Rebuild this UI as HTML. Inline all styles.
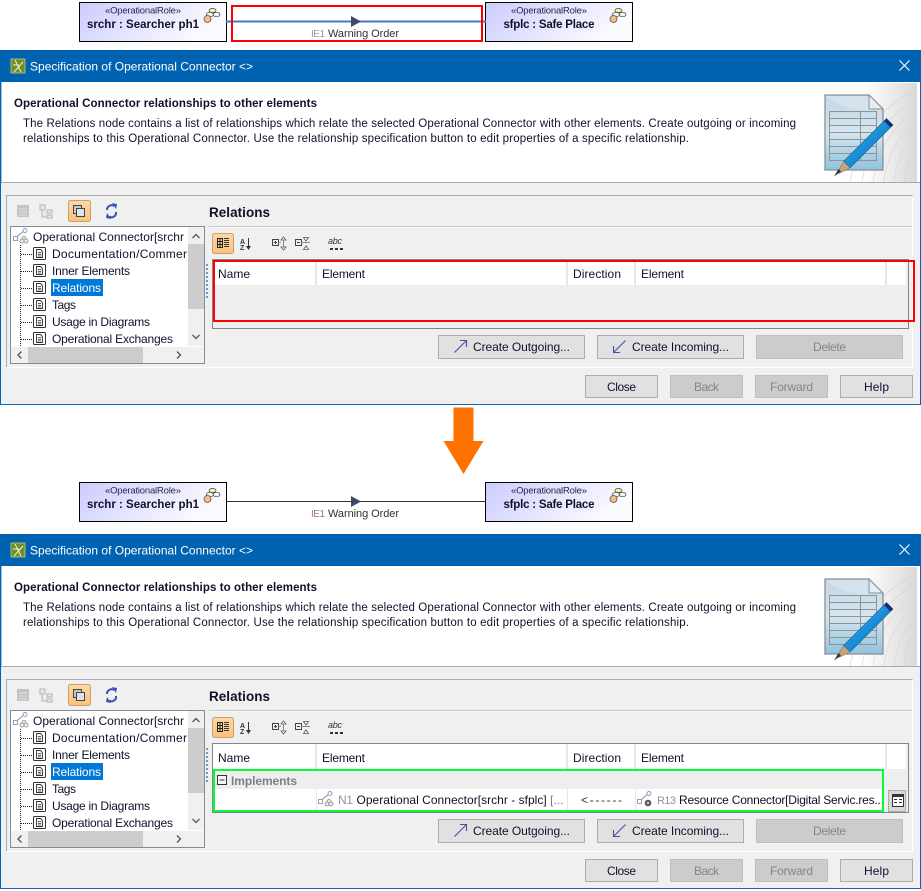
<!DOCTYPE html>
<html><head><meta charset="utf-8"><title>Specification of Operational Connector</title>
<style>
html,body{margin:0;padding:0;background:#fff}
svg{display:block}
text{font-family:"Liberation Sans",sans-serif;font-size:12px;fill:#10102a;white-space:pre}
.b{font-weight:bold}
.w{fill:#fff}
.dis{fill:#858585}
.s{font-size:9.5px;fill:#26264a}
.az{font-size:7px;font-weight:bold;fill:#333}
.abc{font-size:9px;font-style:italic;fill:#333}
</style></head><body>
<svg xmlns="http://www.w3.org/2000/svg" width="921" height="891" viewBox="0 0 921 891">
<defs>
<linearGradient id="role" x1="0" y1="0" x2="1" y2="0.3"><stop offset="0" stop-color="#ccccff"/><stop offset="1" stop-color="#fbfbff"/></linearGradient>
<linearGradient id="wm" x1="0" y1="0" x2="1" y2="0"><stop offset="0" stop-color="#ffffff"/><stop offset=".45" stop-color="#ffffff"/><stop offset="1" stop-color="#d9d9d9"/></linearGradient>
<linearGradient id="doc" x1="0" y1="0" x2="0" y2="1"><stop offset="0" stop-color="#c3d6e6"/><stop offset=".5" stop-color="#d6e5ef"/><stop offset="1" stop-color="#8fc3de"/></linearGradient>
<linearGradient id="pen" x1="0" y1="0" x2="1" y2="1"><stop offset="0" stop-color="#3db6f0"/><stop offset=".5" stop-color="#1a8fd8"/><stop offset="1" stop-color="#0b5a9c"/></linearGradient>
<linearGradient id="sel" x1="0" y1="0" x2="0" y2="1"><stop offset="0" stop-color="#fcd9a6"/><stop offset="1" stop-color="#fbc27c"/></linearGradient>
<g id="roleIcon">
<ellipse cx="6.5" cy="1.5" rx="3.5" ry="2" fill="#f7f2a8" stroke="#444" stroke-width=".7"/>
<ellipse cx="10.5" cy="5.5" rx="3.5" ry="2.2" fill="#f4f4ee" stroke="#444" stroke-width=".7"/>
<ellipse cx="4" cy="5.5" rx="3.5" ry="2.2" fill="#f4f4ee" stroke="#444" stroke-width=".7"/>
<circle cx="1.5" cy="10" r="3.5" fill="#f0bd94" stroke="#555" stroke-width=".8"/>
</g>
<g id="docIcon">
<rect x=".5" y=".5" width="12" height="12" rx="1" fill="#fff" stroke="#333"/>
<path d="M3.500 2.500h4l2 2v6h-6z" fill="#fff" stroke="#333" stroke-width=".9"/>
<path d="M4.800 5.500h3.400M4.800 7.300h3.400M4.800 9h3.400" stroke="#333" stroke-width=".8"/>
</g>
<g id="connIcon" fill="none">
<path d="M3 9.500L11.500 2.500" stroke="#8a8f98" stroke-width="1"/>
<rect x="0.500" y="8.500" width="4" height="4" fill="#fff" stroke="#7f9bc8" stroke-width=".9"/>
<circle cx="12" cy="2.500" r="2" fill="#fff" stroke="#7f9bc8" stroke-width=".9"/>
<circle cx="11" cy="10.500" r="2" fill="#f2eecb" stroke="#8a8a8a" stroke-width=".8"/>
<circle cx="9" cy="13" r="2" fill="#eee" stroke="#8a8a8a" stroke-width=".8"/>
<circle cx="13" cy="13" r="2" fill="#eee" stroke="#8a8a8a" stroke-width=".8"/>
</g>
<g id="connIcon2" fill="none">
<path d="M3 9.500L11.500 2.500" stroke="#8a8f98" stroke-width="1"/>
<rect x="0.500" y="8.500" width="4" height="4" fill="#fff" stroke="#7f9bc8" stroke-width=".9"/>
<circle cx="12" cy="2.500" r="2" fill="#fff" stroke="#7f9bc8" stroke-width=".9"/>
<circle cx="11" cy="12" r="3" fill="#666" stroke="#444" stroke-width=".6"/>
<circle cx="11" cy="12" r="1" fill="#ddd"/>
</g>
<g id="btnOut"><path d="M0.500 13.500L12.500 1.500M6 1.500h6.500v6.500" fill="none" stroke="#4350a8" stroke-width="1.100"/></g>
<g id="btnIn"><path d="M12.500 1.500L0.500 13.500M7 13.500H0.500V7" fill="none" stroke="#4350a8" stroke-width="1.100"/></g>

<g id="chrome">
<rect x="0" y="50" width="921" height="355" fill="#f0f0f0"/>
<rect x="0" y="50" width="921" height="32" fill="#0063b1"/>
<rect x="0" y="50" width="1" height="355" fill="#0063b1"/>
<rect x="920" y="50" width="1" height="355" fill="#0063b1"/>
<rect x="0" y="404" width="921" height="1" fill="#0f6cb8"/>
<rect x="1" y="82" width="919" height="100" fill="#fff"/>
<rect x="1" y="82" width="1" height="100" fill="#9fc4e3"/>
<rect x="820" y="83" width="97" height="99" fill="url(#wm)"/>
<g fill="none" stroke="#d6d6d6" stroke-width=".7">
<path d="M917 100C885 115 868 145 862 182M917 112C892 125 878 150 873 182M917 124C898 134 887 156 884 182M917 136C904 144 896 162 894 182M917 148C909 154 905 168 904 182M917 90C880 105 858 140 850 182"/>
</g>
<path d="M825 95H869L883 109V170H825Z" fill="url(#doc)" stroke="#8a9096" stroke-width="1.300"/>
<path d="M826 96H868C872 102 878 108 882 110C860 112 838 108 826 96Z" fill="#dbe7f1" opacity=".7"/>
<path d="M869 95V109H883Z" fill="#e4eef7" stroke="#8a9096" stroke-width="1"/>
<g stroke="#8e9396" stroke-width="1" fill="none"><rect x="829.500" y="111.500" width="47" height="49"/><path d="M829 118.500h47M829 125.500h47M829 132.500h47M829 139.500h47M829 146.500h47M829 153.500h47M860.500 111v49"/></g>
<path d="M843.500 161.500L886.500 118.500L893 125L850 168Z" fill="url(#pen)" stroke="#1a5f90" stroke-width=".6"/>
<path d="M884 121L886.500 118.500L893 125L890.500 127.500Z" fill="#1d2a78"/>
<path d="M843.500 161.500L850 168L839 173.500L837.500 172Z" fill="#c6a57e" stroke="#7a6248" stroke-width=".5"/>
<path d="M838.500 169L841 171.500L834 176.500Z" fill="#333"/>
<rect x="1" y="182" width="919" height="1" fill="#ababab"/>
<path d="M6.500 367V195.500H912.500" fill="none" stroke="#ababab"/>
<path d="M7 367.500H913M912.500 197V367" fill="none" stroke="#fff"/>
<!-- tree toolbar -->
<rect x="17" y="205" width="12" height="12" fill="#c4c4c4"/>
<path d="M19 209h8M19 212h8M19 215h8" stroke="#e0e0e0"/>
<path d="M40 205h5v5h-5zM47 210h5v3h-5zM47 215h5v3h-5zM42 210v7h5" fill="#e8e8e8" stroke="#b5b5b5"/>
<rect x="68.500" y="200.500" width="22" height="21" rx="2" fill="url(#sel)" stroke="#c8a068"/>
<rect x="73.500" y="205.500" width="8" height="8" fill="#c8c8c8" stroke="#444"/>
<rect x="76.500" y="208.500" width="8" height="8" fill="#dfe3ee" stroke="#444"/>
<path d="M107 210a4.500 4.500 0 0 1 7-4M116 212a4.500 4.500 0 0 1-7 4.500" fill="none" stroke="#3a53b4" stroke-width="2"/>
<path d="M112 203l5 1-1 5zM111 219l-5-1 1-5z" fill="#3a53b4"/>
<!-- tree -->
<rect x="10.500" y="226.500" width="194" height="137" fill="#fff" stroke="#868a92"/>
<rect x="188" y="227" width="16" height="119" fill="#f0f0f0"/>
<rect x="188" y="244" width="16" height="65" fill="#cdcdcd"/>
<path d="M192.500 238l3.500-3.500 3.500 3.500M192.500 335l3.500 3.500 3.500-3.500" fill="none" stroke="#555" stroke-width="1.300"/>
<rect x="11" y="347" width="193" height="16" fill="#f0f0f0"/>
<rect x="28" y="347" width="115" height="16" fill="#cdcdcd"/>
<path d="M21.500 351.500l-3.500 3.500 3.500 3.500M177 351.500l3.500 3.500-3.500 3.500" fill="none" stroke="#555" stroke-width="1.300"/>
<use href="#connIcon" x="13" y="228"/>
<path d="M20.500 245V346M21 254.500h11M21 271.500h11M21 288.500h11M21 305.500h11M21 322.500h11M21 339.500h11" stroke="#222" stroke-dasharray="1 1" fill="none"/>
<use href="#docIcon" x="33" y="247"/><use href="#docIcon" x="33" y="264"/><use href="#docIcon" x="33" y="281"/><use href="#docIcon" x="33" y="298"/><use href="#docIcon" x="33" y="315"/><use href="#docIcon" x="33" y="332"/>
<rect x="51" y="279" width="52" height="17" fill="#0078d7"/>
<!-- splitter dots -->
<path d="M207 264V298" stroke="#6f98d0" stroke-width="2" stroke-dasharray="2 2"/>
<rect x="209" y="226" width="703" height="1" fill="#c8c8c8"/>
<rect x="209" y="227" width="703" height="1" fill="#fafafa"/>
<!-- table toolbar -->
<rect x="212.500" y="233.500" width="21" height="20" rx="2" fill="url(#sel)" stroke="#c8a068"/>
<path d="M217.500 238.500h5v9h-5zM217.500 241.500h5M217.500 244.500h5M220 238.500v9" fill="none" stroke="#222"/>
<path d="M224 238.500h5M224 240.500h5M224 242.500h5M224 244.500h5M224 246.500h5" stroke="#333"/>
<path d="M248.500 238V249" stroke="#333" stroke-width="1"/>
<path d="M246 246h5l-2.500 4z" fill="#333"/>
<rect x="272.500" y="239.500" width="6" height="6" fill="none" stroke="#444"/><path d="M274 242.500h3M275.500 241v3" stroke="#444"/>
<path d="M278 242.500h3M283.500 240v7" stroke="#888"/>
<path d="M281 240l2.500-3 2.500 3zM281 247l2.500 3 2.500-3z" fill="#fff" stroke="#555" stroke-width=".8"/>
<rect x="295.500" y="239.500" width="6" height="6" fill="none" stroke="#444"/><path d="M297 242.500h3" stroke="#444"/>
<path d="M301 242.500h9" stroke="#888"/>
<path d="M303.500 237.500h5l-2.500 3.500zM303.500 249.500h5l-2.500-3.500z" fill="#fff" stroke="#555" stroke-width=".8"/>
<path d="M330 249h3M335 249h3M340 249h3" stroke="#333" stroke-width="2"/>
<!-- bottom buttons -->
<g stroke-width="1">
<rect x="438.500" y="335.500" width="146" height="23" fill="#e1e1e1" stroke="#adadad"/>
<rect x="597.500" y="335.500" width="146" height="23" fill="#e1e1e1" stroke="#adadad"/>
<rect x="756.500" y="335.500" width="146" height="23" fill="#cccccc" stroke="#bfbfbf"/>
<rect x="585.500" y="375.500" width="72" height="22" fill="#e1e1e1" stroke="#adadad"/>
<rect x="670.500" y="375.500" width="72" height="22" fill="#cccccc" stroke="#bfbfbf"/>
<rect x="755.500" y="375.500" width="72" height="22" fill="#cccccc" stroke="#bfbfbf"/>
<rect x="840.500" y="375.500" width="72" height="22" fill="#e1e1e1" stroke="#adadad"/>
</g>
<use href="#btnOut" x="454" y="339"/><use href="#btnIn" x="613" y="339"/>
<!-- title icon & close -->
<rect x="11" y="59" width="14" height="14" fill="#6f8f25" stroke="#bccb85" stroke-width=".8"/>
<path d="M14 72L23 62M15 60l6 12M13 65h6" stroke="#eef3d8" stroke-width="1" fill="none"/>
<path d="M899.500 60.500l10 10M909.500 60.500l-10 10" stroke="#fff" stroke-width="1.100"/>
<!-- table shell -->
<rect x="212.500" y="259.500" width="696" height="69" fill="#eeeeee" stroke="#7f868c"/>
<rect x="213" y="260" width="695" height="25" fill="#fff"/>
<path d="M316 260v25M567 260v25M635 260v25M886 260v25" stroke="#e6e6e6" stroke-width="2"/>
<rect x="906" y="260" width="2" height="25" fill="#eee"/>
</g>

<g id="roleBox">
<rect x="79.500" y="2.500" width="147" height="39" fill="url(#role)" stroke="#000"/>
</g>
</defs>

<rect width="921" height="891" fill="#fff"/>

<!-- TOP DIAGRAM -->
<use href="#roleBox"/>
<use href="#roleBox" x="406"/>
<use href="#roleIcon" x="206" y="9"/>
<use href="#roleIcon" x="612" y="9"/>
<text x="105" y="13.500" class="s" textLength="76">«OperationalRole»</text>
<text x="87" y="28" class="b" style="font-size:11.500px" textLength="112">srchr : Searcher ph1</text>
<text x="511" y="13.500" class="s" textLength="76">«OperationalRole»</text>
<text x="503.500" y="28" class="b" style="font-size:11.500px" textLength="91">sfplc : Safe Place</text>
<path d="M226 21.500H486" stroke="#4a74cc" stroke-width="2"/>
<path d="M351 16L361 21.500L351 27Z" fill="#3d4a6a"/>
<text x="311" y="37" style="font-size:10px;fill:#999" textLength="14">IE1</text>
<text x="328" y="37" style="font-size:11px;fill:#333" textLength="71">Warning Order</text>
<rect x="232" y="6" width="250" height="35" fill="none" stroke="#f00" stroke-width="2"/>

<!-- DIALOG 1 -->
<use href="#chrome"/>
<text x="30" y="70.500" class="w" style="font-size:12px" textLength="223">Specification of Operational Connector &lt;&gt;</text>
<text x="14" y="107" class="b" style="font-size:11.500px" textLength="303">Operational Connector relationships to other elements</text>
<text x="23" y="127" style="font-size:11.500px" textLength="773">The Relations node contains a list of relationships which relate the selected Operational Connector with other elements. Create outgoing or incoming</text>
<text x="23" y="142" style="font-size:11.500px" textLength="666">relationships to this Operational Connector. Use the relationship specification button to edit properties of a specific relationship.</text>
<text x="33" y="241" textLength="151">Operational Connector[srchr</text>
<text x="52" y="258" textLength="135">Documentation/Commer</text>
<text x="52" y="275" textLength="78">Inner Elements</text>
<text x="52" y="292" class="w" textLength="49">Relations</text>
<text x="52" y="309" textLength="24">Tags</text>
<text x="52" y="326" textLength="98">Usage in Diagrams</text>
<text x="52" y="343" textLength="121">Operational Exchanges</text>
<text x="209" y="217" class="b" style="font-size:13.500px" textLength="61">Relations</text>
<text x="240" y="244" class="az">A</text>
<text x="240" y="250" class="az">Z</text>
<text x="328" y="244" class="abc" textLength="14">abc</text>
<text x="218" y="278" textLength="32">Name</text>
<text x="322" y="278" textLength="43">Element</text>
<text x="573" y="278" textLength="48">Direction</text>
<text x="641" y="278" textLength="43">Element</text>
<rect x="214" y="261" width="700" height="60" fill="none" stroke="#f00" stroke-width="2"/>
<text x="473" y="351" textLength="97">Create Outgoing...</text>
<text x="632" y="351" textLength="97">Create Incoming...</text>
<text x="813" y="351" class="dis" textLength="33">Delete</text>
<text x="607" y="391" textLength="29">Close</text>
<text x="694" y="391" class="dis" textLength="25">Back</text>
<text x="770" y="391" class="dis" textLength="43">Forward</text>
<text x="864" y="391" textLength="25">Help</text>

<!-- ORANGE ARROW -->
<path d="M453.500 407.500H473.500V441H483.500L463.500 474L443.500 441H453.500Z" fill="#ff7200"/>

<!-- SECOND DIAGRAM -->
<use href="#roleBox" y="480"/>
<use href="#roleBox" x="406" y="480"/>
<use href="#roleIcon" x="206" y="489"/>
<use href="#roleIcon" x="612" y="489"/>
<text x="105" y="493.500" class="s" textLength="76">«OperationalRole»</text>
<text x="87" y="508" class="b" style="font-size:11.500px" textLength="112">srchr : Searcher ph1</text>
<text x="511" y="493.500" class="s" textLength="76">«OperationalRole»</text>
<text x="503.500" y="508" class="b" style="font-size:11.500px" textLength="91">sfplc : Safe Place</text>
<path d="M227 501.500H485" stroke="#333" stroke-width="1"/>
<path d="M351 496L361 501.500L351 507Z" fill="#3d4a6a"/>
<text x="311" y="517" style="font-size:10px;fill:#a07878" textLength="14">IE1</text>
<text x="328" y="517" style="font-size:11px;fill:#333" textLength="71">Warning Order</text>

<!-- DIALOG 2 -->
<use href="#chrome" y="484"/>
<text x="30" y="554.500" class="w" style="font-size:12px" textLength="223">Specification of Operational Connector &lt;&gt;</text>
<text x="14" y="591" class="b" style="font-size:11.500px" textLength="303">Operational Connector relationships to other elements</text>
<text x="23" y="611" style="font-size:11.500px" textLength="773">The Relations node contains a list of relationships which relate the selected Operational Connector with other elements. Create outgoing or incoming</text>
<text x="23" y="626" style="font-size:11.500px" textLength="666">relationships to this Operational Connector. Use the relationship specification button to edit properties of a specific relationship.</text>
<text x="33" y="725" textLength="151">Operational Connector[srchr</text>
<text x="52" y="742" textLength="135">Documentation/Commer</text>
<text x="52" y="759" textLength="78">Inner Elements</text>
<text x="52" y="776" class="w" textLength="49">Relations</text>
<text x="52" y="793" textLength="24">Tags</text>
<text x="52" y="810" textLength="98">Usage in Diagrams</text>
<text x="52" y="827" textLength="121">Operational Exchanges</text>
<text x="209" y="701" class="b" style="font-size:13.500px" textLength="61">Relations</text>
<text x="240" y="728" class="az">A</text>
<text x="240" y="734" class="az">Z</text>
<text x="328" y="728" class="abc" textLength="14">abc</text>
<text x="218" y="762" textLength="32">Name</text>
<text x="322" y="762" textLength="43">Element</text>
<text x="573" y="762" textLength="48">Direction</text>
<text x="641" y="762" textLength="43">Element</text>
<!-- rows -->
<rect x="214" y="789" width="669" height="22" fill="#fff"/>
<path d="M316.500 789v22M567.500 789v22M635.500 789v22" stroke="#e8e8e8" stroke-width="1"/>
<rect x="217.500" y="775.500" width="9" height="9" fill="#f4f4f4" stroke="#333"/>
<path d="M219.500 780h5" stroke="#333"/>
<text x="231" y="785" class="b" style="fill:#7a7f8a" textLength="66">Implements</text>
<use href="#connIcon" x="318" y="791"/>
<text x="338" y="804" style="fill:#8d93a3" textLength="15">N1</text>
<text x="356.500" y="804" textLength="207">Operational Connector[srchr - sfplc] <tspan style="fill:#8d6f9f">[...</tspan></text>
<text x="581" y="804" style="fill:#333" textLength="41">&lt;------</text>
<use href="#connIcon2" x="637" y="791"/>
<text x="657" y="804" style="font-size:11px;fill:#8d93a3" textLength="19">R13</text>
<text x="679" y="804" textLength="205">Resource Connector[Digital Servic.res...</text>
<rect x="888.500" y="790.500" width="17" height="21" fill="#d8d8d8" stroke="#adadad"/>
<rect x="892.500" y="794.500" width="11" height="12" fill="#fff" stroke="#333"/>
<rect x="892" y="794" width="12" height="3" fill="#333"/>
<path d="M894 799.500h3M899 799.500h3M894 802.500h3M899 802.500h3" stroke="#333"/>
<rect x="214" y="770" width="669" height="41" fill="none" stroke="#00ff33" stroke-width="2"/>
<text x="473" y="835" textLength="97">Create Outgoing...</text>
<text x="632" y="835" textLength="97">Create Incoming...</text>
<text x="813" y="835" class="dis" textLength="33">Delete</text>
<text x="607" y="875" textLength="29">Close</text>
<text x="694" y="875" class="dis" textLength="25">Back</text>
<text x="770" y="875" class="dis" textLength="43">Forward</text>
<text x="864" y="875" textLength="25">Help</text>
</svg>
</body></html>
